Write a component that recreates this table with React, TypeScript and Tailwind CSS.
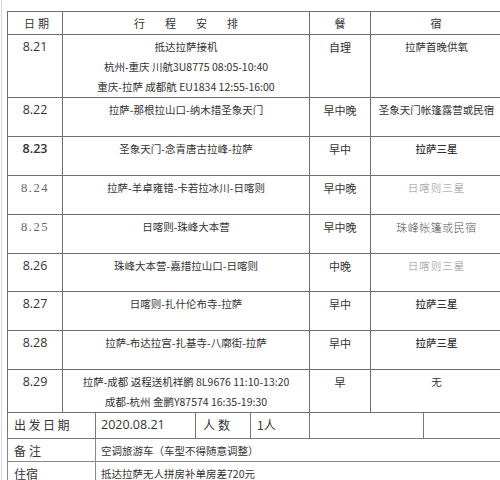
const rows = [
  { date: "8.21", lines: ["抵达拉萨接机", "杭州-重庆 川航3U8775 08:05-10:40", "重庆-拉萨 成都航 EU1834 12:55-16:00"], meal: "自理", stay: "拉萨首晚供氧", h: "h-[60px]" },
  { date: "8.22", lines: ["拉萨-那根拉山口-纳木措圣象天门"], meal: "早中晚", stay: "圣象天门帐篷露营或民宿", h: "h-[39px]" },
  { date: "8.23", lines: ["圣象天门-念青唐古拉峰-拉萨"], meal: "早中", stay: "拉萨三星", h: "h-[39px]", bold: true },
  { date: "8.24", lines: ["拉萨-羊卓雍错-卡若拉冰川-日喀则"], meal: "早中晚", stay: "日喀则三星", h: "h-[39px]", serif: true, stayLight: true },
  { date: "8.25", lines: ["日喀则-珠峰大本营"], meal: "早中晚", stay: "珠峰帐篷或民宿", h: "h-[39px]", serif: true },
  { date: "8.26", lines: ["珠峰大本营-嘉措拉山口-日喀则"], meal: "中晚", stay: "日喀则三星", h: "h-[38px]", stayLight: true },
  { date: "8.27", lines: ["日喀则-扎什伦布寺-拉萨"], meal: "早中", stay: "拉萨三星", h: "h-[39px]", bold: true },
  { date: "8.28", lines: ["拉萨-布达拉宫-扎基寺-八廓街-拉萨"], meal: "早中", stay: "拉萨三星", h: "h-[39px]", bold: true },
  { date: "8.29", lines: ["拉萨-成都 返程送机祥鹏 8L9676 11:10-13:20", "成都-杭州 金鹏Y87574 16:35-19:30"], meal: "早", stay: "无", h: "h-[41px]" },
];

const cjk = "font-['Noto_Sans_CJK_SC',sans-serif]";

export default function App() {
  return (
    <div className="w-[500px] h-[480px] overflow-hidden bg-white text-[#333]">
      <div className="ml-[1px] h-[480px] border-l border-[#d6d6d6] pl-[5px] pt-[11px]">
        <table className={`w-[502px] table-fixed border-collapse text-[10.5px] ${cjk}`}>
          <colgroup>
            <col className="w-[55px]" />
            <col className="w-[247px]" />
            <col className="w-[61px]" />
            <col className="w-[139px]" />
          </colgroup>
          <thead>
            <tr className="h-[23px]">
              <th className="border border-[#6f6f6f] font-normal text-[11px] tracking-[3px] pl-[6px]">日期</th>
              <th className="border border-[#6f6f6f] font-normal text-[11px] tracking-[20px] pl-[20px]">行程安排</th>
              <th className="border border-[#6f6f6f] font-normal text-[11px]">餐</th>
              <th className="border border-[#6f6f6f] font-normal text-[11px] pr-[8px]">宿</th>
            </tr>
          </thead>
          <tbody>
            {rows.map((r) => (
              <tr key={r.date} className={r.h}>
                <td className="border border-[#6f6f6f] align-top text-center pt-[2px]">
                  {r.serif ? (
                    <div className="font-['Liberation_Serif',serif] text-[12.5px] leading-[20px] tracking-[1.5px] text-[#666]">{r.date}</div>
                  ) : (
                    <div className={`font-['Open_Sans',sans-serif] text-[12.5px] leading-[20px] ${r.date === "8.23" ? "font-semibold" : ""}`}>{r.date}</div>
                  )}
                </td>
                <td className="border border-[#6f6f6f] align-top text-center pt-[2px]">
                  {r.lines.map((l) => (
                    <div key={l} className="leading-[20px] whitespace-nowrap">{l}</div>
                  ))}
                </td>
                <td className="border border-[#6f6f6f] align-top text-center pt-[2px]">
                  <div className="leading-[20px] text-[11px]">{r.meal}</div>
                </td>
                <td className="border border-[#6f6f6f] align-top text-center pt-[2px] pr-[7px]">
                  {r.stayLight ? (
                    <div className="leading-[20px] font-light text-[#8a8a8a] tracking-[1px]">{r.stay}</div>
                  ) : r.serif ? (
                    <div className="leading-[20px] font-light text-[#555] tracking-[0.5px] text-[11px]">{r.stay}</div>
                  ) : (
                    <div className={`leading-[20px] ${r.bold ? "font-medium" : ""}`}>{r.stay}</div>
                  )}
                </td>
              </tr>
            ))}
          </tbody>
        </table>
        <table className={`w-[502px] table-fixed border-collapse text-[12px] ${cjk}`}>
          <colgroup>
            <col className="w-[88px]" />
            <col className="w-[100px]" />
            <col className="w-[55px]" />
            <col className="w-[59px]" />
            <col className="w-[114px]" />
            <col className="w-[86px]" />
          </colgroup>
          <tbody>
            <tr className="h-[25px]">
              <td className="border border-t-0 border-[#777] pl-[6px] tracking-[2.5px]">出发日期</td>
              <td className="border border-t-0 border-[#777] pl-[5px] font-['Open_Sans',sans-serif] text-[12.5px]">2020.08.21</td>
              <td className="border border-t-0 border-[#777] pl-[7px] tracking-[3px]">人数</td>
              <td className="border border-t-0 border-[#777] pl-[6px]">1人</td>
              <td className="border border-t-0 border-[#777]"></td>
              <td className="border border-t-0 border-[#777]"></td>
            </tr>
            <tr className="h-[23px]">
              <td className="border border-[#8a8a8a] pl-[6px] pt-[2px] tracking-[3px]">备注</td>
              <td colSpan={5} className="border border-[#8a8a8a] pl-[5px] pt-[2px] text-[10.5px]">空调旅游车（车型不得随意调整）</td>
            </tr>
            <tr className="h-[23px]">
              <td className="border border-[#8a8a8a] pl-[6px] pt-[2px]">住宿</td>
              <td colSpan={5} className="border border-[#8a8a8a] pl-[5px] pt-[2px] text-[10.5px]">抵达拉萨无人拼房补单房差720元</td>
            </tr>
          </tbody>
        </table>
      </div>
    </div>
  );
}
